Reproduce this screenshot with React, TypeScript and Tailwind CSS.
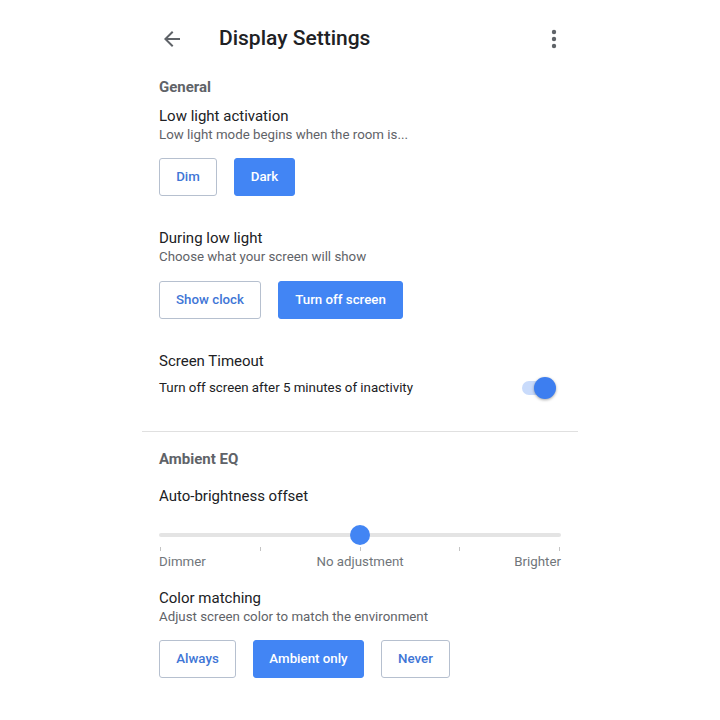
import {ReactNode} from "react";

type Choice = { label: string, selected?: boolean, width: string };

const ChoiceButton = ({label, selected, width}: Choice) => {
    const base = "h-[38px] rounded-[3px] text-[13.3px] font-medium flex items-center justify-center";
    return selected
        ? <button className={`${base} ${width} bg-[#4285f4] text-white border border-[#4285f4]`}>{label}</button>
        : <button className={`${base} ${width} bg-white text-[#3f76d6] border border-[#b6c0cf]`}>{label}</button>;
};

const ChoiceRow = ({choices, className}: { choices: Choice[], className: string }) => (
    <div className={`flex gap-[17px] ${className}`}>
        {choices.map(c => <ChoiceButton key={c.label} {...c}/>)}
    </div>
);

const SectionLabel = ({children, className}: { children: ReactNode, className: string }) => (
    <div className={`text-[15px] leading-[20px] font-bold text-[#5f6368] ${className}`}>{children}</div>
);

const Title = ({children, className}: { children: ReactNode, className: string }) => (
    <div className={`text-[15px] leading-[20px] text-[#202124] ${className}`}>{children}</div>
);

const Subtitle = ({children}: { children: ReactNode }) => (
    <div className="text-[13.3px] leading-[18px] text-[#5f6368]">{children}</div>
);

const Toggle = () => (
    <div className="relative w-[34px] h-[22px] mr-[5px] flex items-center">
        <div className="w-[32px] h-[14px] rounded-full bg-[#c9dbfb]"/>
        <div className="absolute right-0 top-0 w-[22px] h-[22px] rounded-full bg-[#3d7ef0] shadow-[0_1px_3px_rgba(0,0,0,0.35)]"/>
    </div>
);

const BrightnessSlider = () => (
    <div className="mt-[19px]">
        <div className="relative h-[20px] flex items-center">
            <div className="w-full h-[4px] rounded-full bg-[#e4e4e4]"/>
            <div className="absolute left-1/2 top-0 -ml-[10px] w-[20px] h-[20px] rounded-full bg-[#4285f4]"/>
        </div>
        <div className="flex justify-between px-px mt-[2px]">
            {[0, 1, 2, 3, 4].map(i => <div key={i} className="w-px h-[4px] bg-[#c4c4c4]"/>)}
        </div>
        <div className="flex justify-between text-[13.3px] leading-[18px] text-[#70757a] mt-[2px]">
            <span>Dimmer</span>
            <span>No adjustment</span>
            <span>Brighter</span>
        </div>
    </div>
);

export default function App() {
    return (
        <div className="w-[720px] h-[720px] bg-white flex justify-center font-['Roboto',sans-serif]">
            <div className="w-[436px] pt-[11px]">
                <div className="h-14 flex items-center px-[17px]">
                    <svg width="24" height="24" viewBox="0 0 24 24" className="ml-[1px]">
                        <path d="M20 11H7.83l5.59-5.59L12 4l-8 8 8 8 1.41-1.41L7.83 13H20v-2z" fill="#5f6368"/>
                    </svg>
                    <div className="ml-[35px] text-[21px] font-medium text-[#202124]">Display Settings</div>
                    <svg width="24" height="24" viewBox="0 0 24 24" className="ml-auto mr-[-5px]">
                        <circle cx="12" cy="5" r="2.2" fill="#5f6368"/>
                        <circle cx="12" cy="12" r="2.2" fill="#5f6368"/>
                        <circle cx="12" cy="19" r="2.2" fill="#5f6368"/>
                    </svg>
                </div>

                <div className="px-[17px]">
                    <SectionLabel className="mt-[10px]">General</SectionLabel>
                    <Title className="mt-[9px]">Low light activation</Title>
                    <Subtitle>Low light mode begins when the room is...</Subtitle>
                    <ChoiceRow className="mt-[14px]" choices={[
                        {label: "Dim", width: "w-[58px]"},
                        {label: "Dark", selected: true, width: "w-[61px]"}
                    ]}/>

                    <Title className="mt-[32px]">During low light</Title>
                    <Subtitle>Choose what your screen will show</Subtitle>
                    <ChoiceRow className="mt-[15px]" choices={[
                        {label: "Show clock", width: "w-[102px]"},
                        {label: "Turn off screen", selected: true, width: "w-[125px]"}
                    ]}/>

                    <Title className="mt-[32px]">Screen Timeout</Title>
                    <div className="mt-[6px] flex items-center justify-between">
                        <div className="text-[13.3px] leading-[18px] text-[#202124]">Turn off screen after 5 minutes of inactivity</div>
                        <Toggle/>
                    </div>
                </div>

                <div className="mt-[32px] h-px bg-[#e0e0e0]"/>

                <div className="px-[17px]">
                    <SectionLabel className="mt-[17px]">Ambient EQ</SectionLabel>
                    <Title className="mt-[17px]">Auto-brightness offset</Title>
                    <BrightnessSlider/>

                    <Title className="mt-[17px]">Color matching</Title>
                    <Subtitle>Adjust screen color to match the environment</Subtitle>
                    <ChoiceRow className="mt-[14px]" choices={[
                        {label: "Always", width: "w-[77px]"},
                        {label: "Ambient only", selected: true, width: "w-[111px]"},
                        {label: "Never", width: "w-[69px]"}
                    ]}/>
                </div>
            </div>
        </div>
    );
}
